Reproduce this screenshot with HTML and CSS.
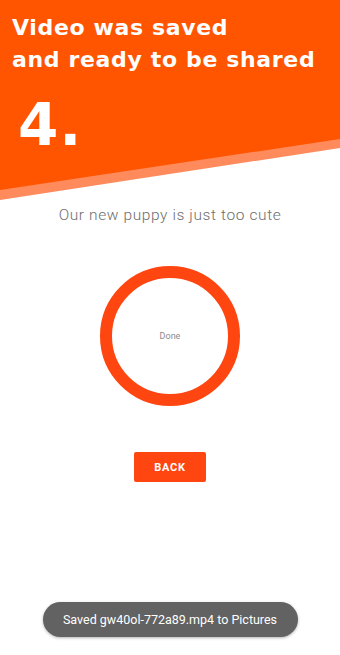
FILE: index.html
```html
<!DOCTYPE html>
<html>
<head>
<meta charset="utf-8">
<link rel="stylesheet" href="styles.css">
</head>
<body>
<div class="screen">
  <header class="hero">
    <h1 class="title">Video was saved<br>and ready to be shared</h1>
    <div class="step">4.</div>
  </header>
  <p class="caption">Our new puppy is just too cute</p>
  <div class="ring-wrap">
    <div class="ring"><span class="ring-label">Done</span></div>
  </div>
  <div class="actions">
    <button class="back">BACK</button>
  </div>
  <div class="toast-wrap">
    <div class="toast">Saved gw40ol-772a89.mp4 to Pictures</div>
  </div>
</div>
</body>
</html>
```
FILE: styles.css
```css
html, body {
  margin: 0;
  padding: 0;
  background: #ffffff;
}
.screen {
  width: 340px;
  height: 655px;
  display: flex;
  flex-direction: column;
  font-family: Roboto, "Noto Sans", sans-serif;
  overflow: hidden;
}
.hero {
  position: relative;
  height: 200px;
  flex: none;
  background: #ff8a5c;
  clip-path: polygon(0 0, 100% 0, 100% 148px, 0 200px);
  color: #fff;
  padding: 12px 0 0 12px;
  box-sizing: border-box;
}
.hero::before {
  content: "";
  position: absolute;
  inset: 0;
  background: #ff5500;
  clip-path: polygon(0 0, 100% 0, 100% 139px, 0 190px);
}
.title {
  position: relative;
  margin: 0;
  font-family: "DejaVu Sans", sans-serif;
  font-weight: 700;
  font-size: 22px;
  line-height: 32px;
  letter-spacing: 0.65px;
}
.step {
  position: relative;
  margin: 20px 0 0 6px;
  font-family: "DejaVu Sans", sans-serif;
  font-weight: 700;
  font-size: 58px;
  line-height: 58px;
  letter-spacing: 1px;
}
.caption {
  margin: 5px 0 0;
  text-align: center;
  font-size: 15.5px;
  font-weight: 300;
  letter-spacing: 0.6px;
  color: #6e6e6e;
  line-height: 20px;
}
.ring-wrap {
  display: flex;
  justify-content: center;
  margin-top: 41px;
}
.ring {
  width: 140px;
  height: 140px;
  box-sizing: border-box;
  border: 12px solid #ff4510;
  border-radius: 50%;
  display: flex;
  align-items: center;
  justify-content: center;
}
.ring-label {
  font-size: 9px;
  color: #8a8a8a;
}
.actions {
  display: flex;
  justify-content: center;
  margin-top: 46px;
}
.back {
  width: 72px;
  height: 30px;
  border: none;
  border-radius: 2px;
  background: #ff4510;
  color: #fff;
  font-family: Roboto, sans-serif;
  font-weight: 700;
  font-size: 11px;
  letter-spacing: 0.8px;
  padding: 0;
}
.toast-wrap {
  display: flex;
  justify-content: center;
  margin-top: auto;
  margin-bottom: 18px;
}
.toast {
  width: 255px;
  height: 35px;
  border-radius: 18px;
  background: #626262;
  color: #fff;
  font-size: 12.5px;
  display: flex;
  align-items: center;
  justify-content: center;
  box-shadow: 0 1px 3px rgba(0,0,0,0.3);
}
```
